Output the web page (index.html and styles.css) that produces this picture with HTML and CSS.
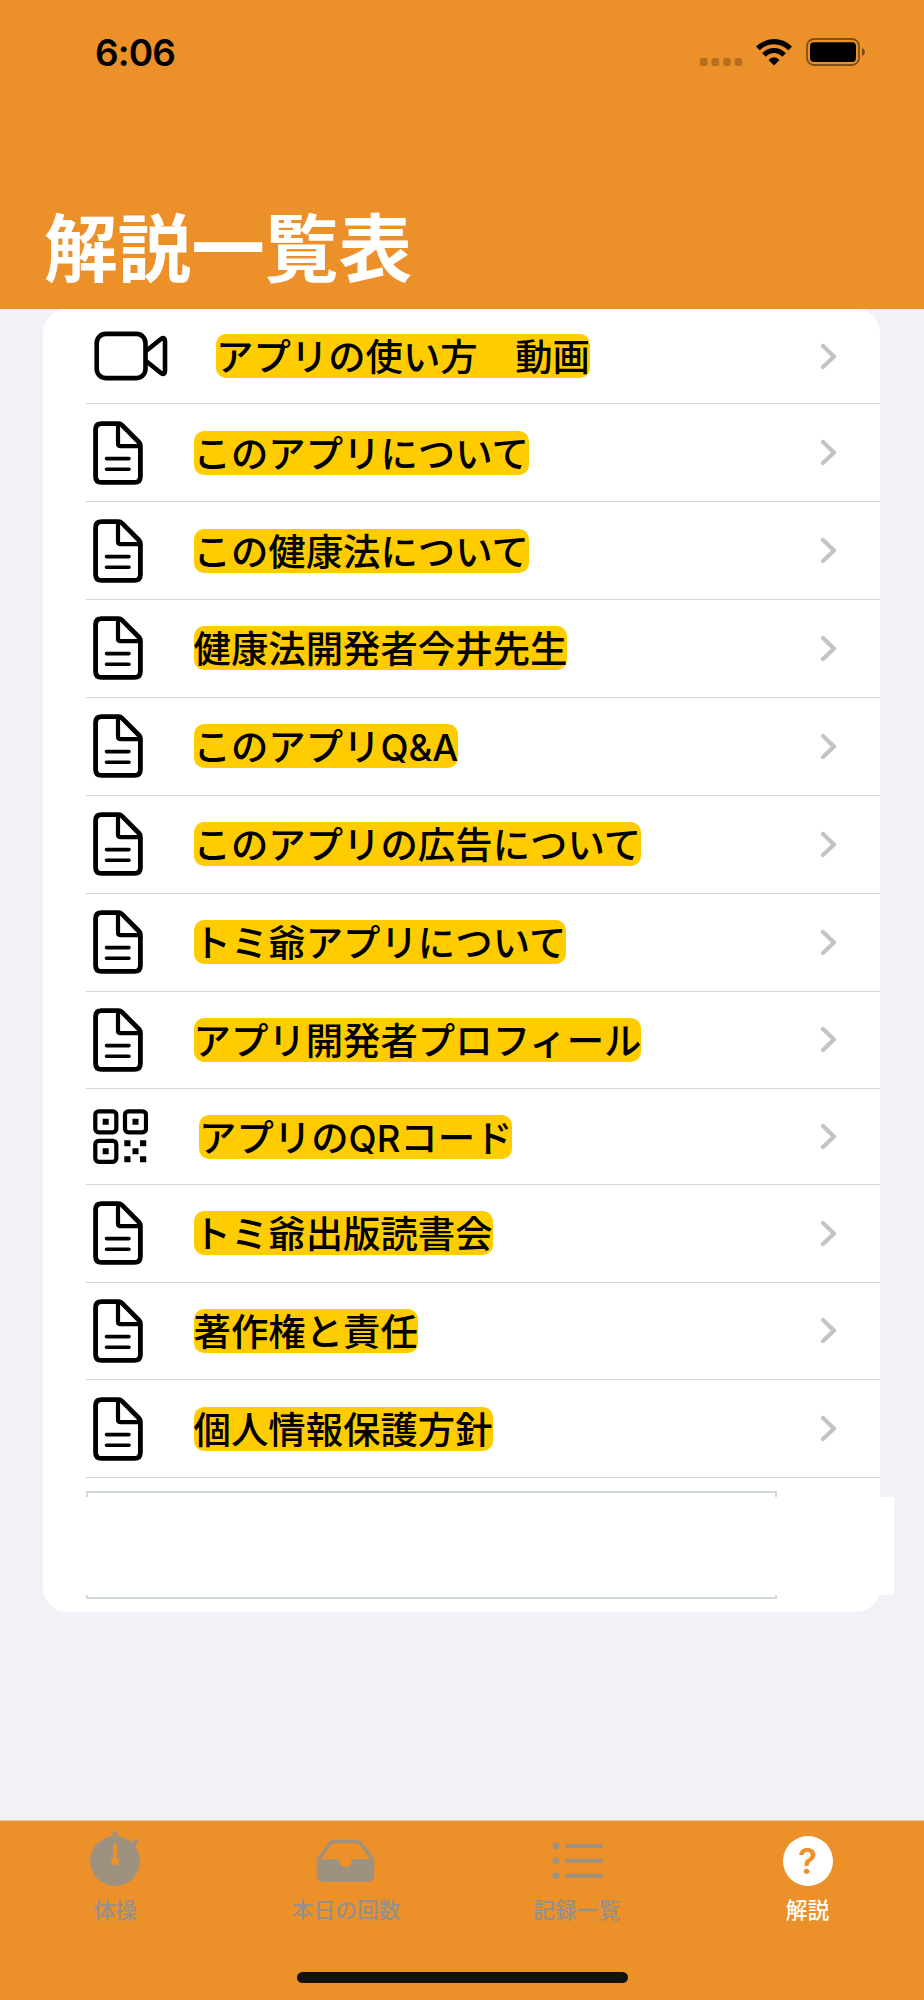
FILE: index.html
```html
<!DOCTYPE html>
<html lang="ja">
<head>
    <meta charset="UTF-8">
    <meta name="viewport" content="width=device-width, initial-scale=1.0">
    <title>解説一覧表</title>
    <link rel="stylesheet" href="styles.css">
</head>
<body>
    <!-- shared icons -->
    <svg class="sprite">
        <symbol id="doc" viewBox="0 0 50 64">
            <g fill="none" stroke="#000" stroke-linecap="round" stroke-linejoin="round">
                <path stroke-width="4.8" d="M8 2.6H25.5Q27.5 2.6 29 4.1L46 21.2Q47.4 22.6 47.4 25V55.4Q47.4 61.4 41.4 61.4H8.6Q2.6 61.4 2.6 55.4V8.6Q2.6 2.6 8.6 2.6Z"/>
                <path stroke-width="4.2" d="M25 4V22.5Q25 25.2 27.7 25.2H46"/>
                <path stroke-width="3.6" d="M13.5 37.6H36M13.5 48.2H36"/>
            </g>
        </symbol>
        <symbol id="chevron" viewBox="0 0 17 27">
            <path fill="none" stroke="#c4c4c7" stroke-width="4.2" stroke-linecap="round" stroke-linejoin="round" d="M3 2.9L14 13.5L3 24.1"/>
        </symbol>
    </svg>

    <header>
        <div class="status-bar">
            <span class="time">6:06</span>
            <div class="status-icons">
                <svg class="dots" width="43" height="8" viewBox="0 0 43 8">
                    <rect x="0" width="7.6" height="8" rx="2"/>
                    <rect x="11.6" width="7.6" height="8" rx="2"/>
                    <rect x="23.1" width="7.6" height="8" rx="2"/>
                    <rect x="34.6" width="7.6" height="8" rx="2"/>
                </svg>
                <svg class="wifi" width="36" height="27" viewBox="0 0 36 27">
                    <path fill="none" stroke="#000" stroke-width="5.2" d="M1.8 9.4Q9 2.7 18 2.7T34.2 9.4"/>
                    <path fill="none" stroke="#000" stroke-width="5" d="M8 16Q12.2 11.6 18 11.6T28 16"/>
                    <path d="M12.5 21Q15 18.2 18 18.2T23.5 21L18 26.6Z"/>
                </svg>
                <svg class="battery" width="60" height="28" viewBox="0 0 60 28">
                    <rect x="1" y="1" width="52" height="26" rx="7" fill="none" stroke="#000" stroke-width="1.8" opacity=".45"/>
                    <rect x="4" y="4.2" width="46" height="19.8" rx="4"/>
                    <path d="M56 9.7Q59 11.5 59 14T56 18.3Z" opacity=".5"/>
                </svg>
            </div>
        </div>
        <h1>解説一覧表</h1>
    </header>

    <main>
        <ul class="list">
            <li class="row first">
                <svg class="icon camera" width="74" height="50" viewBox="0 0 74 50">
                    <g fill="none" stroke="#000" stroke-width="4.6" stroke-linejoin="round">
                        <rect x="2.7" y="2.9" width="48.8" height="44.2" rx="9"/>
                        <path d="M52 20L67 8Q71 5.5 71 10V40Q71 44.5 67 42L52 30"/>
                    </g>
                </svg>
                <span class="label">アプリの使い方　動画</span>
                <svg class="chevron"><use href="#chevron"/></svg>
            </li>
            <li class="row">
                <svg class="icon"><use href="#doc"/></svg>
                <span class="label">このアプリについて</span>
                <svg class="chevron"><use href="#chevron"/></svg>
            </li>
            <li class="row">
                <svg class="icon"><use href="#doc"/></svg>
                <span class="label">この健康法について</span>
                <svg class="chevron"><use href="#chevron"/></svg>
            </li>
            <li class="row">
                <svg class="icon"><use href="#doc"/></svg>
                <span class="label">健康法開発者今井先生</span>
                <svg class="chevron"><use href="#chevron"/></svg>
            </li>
            <li class="row">
                <svg class="icon"><use href="#doc"/></svg>
                <span class="label">このアプリ<span class="latin">Q&amp;A</span></span>
                <svg class="chevron"><use href="#chevron"/></svg>
            </li>
            <li class="row">
                <svg class="icon"><use href="#doc"/></svg>
                <span class="label">このアプリの広告について</span>
                <svg class="chevron"><use href="#chevron"/></svg>
            </li>
            <li class="row">
                <svg class="icon"><use href="#doc"/></svg>
                <span class="label">トミ爺アプリについて</span>
                <svg class="chevron"><use href="#chevron"/></svg>
            </li>
            <li class="row">
                <svg class="icon"><use href="#doc"/></svg>
                <span class="label">アプリ開発者プロフィール</span>
                <svg class="chevron"><use href="#chevron"/></svg>
            </li>
            <li class="row qr-row">
                <svg class="icon qr" width="55" height="55" viewBox="0 0 55 55">
                    <g fill="none" stroke="#000" stroke-width="4.2">
                        <rect x="2.3" y="2.3" width="21" height="21" rx="3.5"/>
                        <rect x="32" y="2.3" width="21" height="21" rx="3.5"/>
                        <rect x="2.3" y="31.8" width="21" height="21" rx="3.5"/>
                    </g>
                    <path d="M9.7 9.7h6v6h-6zM39.5 9.7h6v6h-6zM9.7 39.3h6v6h-6zM39.5 39.3h6v6h-6zM31.3 31.3h6.2v6h-6.2zM47 31.3h6.2v6H47zM31.3 47.2h6.2v6h-6.2zM47 47.2h6.2v6H47z"/>
                </svg>
                <span class="label">アプリの<span class="latin">QR</span>コード</span>
                <svg class="chevron"><use href="#chevron"/></svg>
            </li>
            <li class="row">
                <svg class="icon"><use href="#doc"/></svg>
                <span class="label">トミ爺出版読書会</span>
                <svg class="chevron"><use href="#chevron"/></svg>
            </li>
            <li class="row">
                <svg class="icon"><use href="#doc"/></svg>
                <span class="label">著作権と責任</span>
                <svg class="chevron"><use href="#chevron"/></svg>
            </li>
            <li class="row">
                <svg class="icon"><use href="#doc"/></svg>
                <span class="label">個人情報保護方針</span>
                <svg class="chevron"><use href="#chevron"/></svg>
            </li>
            <li class="ad">
                <div class="ad-frame"></div>
                <div class="ad-cover"></div>
            </li>
        </ul>
    </main>

    <nav>
        <div class="tab">
            <svg width="60" height="60" viewBox="0 0 60 60">
                <circle cx="30" cy="30" r="25"/>
                <path fill="none" stroke="#9f917f" stroke-width="5" stroke-linecap="round" d="M30 2.5V8M47 16L50.5 10.7"/>
                <path fill="none" stroke="#ec9029" stroke-width="4" stroke-linecap="round" d="M30 14.5V30"/>
                <circle cx="30" cy="30.2" r="4" fill="#ec9029"/>
            </svg>
            <span>体操</span>
        </div>
        <div class="tab">
            <svg width="60" height="60" viewBox="0 0 60 60">
                <path fill="none" stroke="#9f917f" stroke-width="3.6" stroke-linejoin="round" d="M2.5 28L14 12.5Q16 10.5 18 10.5H41Q43 10.5 44.8 12.5L56.5 28"/>
                <path d="M.8 28.3H23.2Q23.4 36.3 29.5 36.3T35.8 28.3H58.2V44.5Q58.2 51 51.7 51H7.3Q.8 51 .8 44.5Z"/>
            </svg>
            <span>本日の回数</span>
        </div>
        <div class="tab">
            <svg width="60" height="60" viewBox="0 0 60 60">
                <circle cx="9" cy="15" r="3.4"/>
                <circle cx="9" cy="29.8" r="3.4"/>
                <circle cx="9" cy="44.7" r="3.4"/>
                <path fill="none" stroke="#9f917f" stroke-width="4" stroke-linecap="round" d="M20 15H54M20 29.8H54M20 44.7H54"/>
            </svg>
            <span>記録一覧</span>
        </div>
        <div class="tab active">
            <div class="help">?</div>
            <span>解説</span>
        </div>
        <div class="home-bar"></div>
    </nav>
</body>
</html>
```
FILE: styles.css
```css
* {
    box-sizing: border-box;
}

body {
    margin: 0;
    height: 2000px;
    display: flex;
    flex-direction: column;
    background-color: #f2f1f7;
    font-family: Inter, "Noto Sans CJK JP", sans-serif;
    overflow: hidden;
}

.sprite {
    display: none;
}

svg {
    display: block;
    flex: none;
}

header {
    height: 309px;
    flex: none;
    background-color: #ec9029;
}

.status-bar {
    height: 104px;
    padding: 0 58px 0 95px;
    display: flex;
    justify-content: space-between;
    align-items: center;
}

.time {
    font-size: 37px;
    font-weight: 600;
    letter-spacing: -0.9px;
}

.status-icons {
    display: flex;
    align-items: center;
}

.dots {
    margin: 19px 13px 0 0;
    opacity: 0.22;
}

.wifi {
    margin-right: 14px;
}

h1 {
    margin: 85px 0 0 44px;
    font-family: "Noto Sans CJK JP", sans-serif;
    font-size: 73.6px;
    font-weight: 700;
    line-height: 110px;
    color: #fff;
}

main {
    flex: 1;
}

.list {
    width: 837px;
    height: 1303px;
    margin: 0 0 0 43px;
    padding: 0 0 0 43px;
    list-style: none;
    background-color: #fff;
    border-radius: 24px;
}

.row {
    height: 97.9px;
    padding: 0 43px 0 7px;
    display: flex;
    align-items: center;
    border-bottom: 1px solid #d5d5d6;
}

.first {
    height: 95.2px;
}

.qr-row {
    height: 95.2px;
}

.icon {
    width: 50px;
    height: 64px;
    margin-right: 50.5px;
}

.camera {
    width: 74px;
    height: 50px;
    margin: 0 48px 0 1px;
}

.qr {
    width: 55px;
    height: 55px;
    margin-right: 51px;
}

.label {
    height: 44px;
    font-family: "Noto Sans CJK JP", sans-serif;
    font-size: 37.4px;
    font-weight: 500;
    line-height: 42px;
    white-space: nowrap;
    background-color: #fc0;
    border-radius: 10px;
}

.latin {
    font-family: Inter, sans-serif;
    font-size: 36.5px;
    font-weight: 500;
}

.chevron {
    width: 17px;
    height: 27px;
    margin-left: auto;
}

/* empty banner slot with its cover */
.ad {
    position: relative;
    height: 134px;
    padding-top: 13px;
}

.ad-frame {
    width: 691px;
    height: 108px;
    border: 2px solid #d0dadd;
}

.ad-cover {
    position: absolute;
    top: 19px;
    left: 0;
    width: 808px;
    height: 98px;
    background-color: #fff;
}

nav {
    position: relative;
    height: 180px;
    flex: none;
    display: flex;
    padding-right: 1px;
    background-color: #ec9029;
    border-top: 1px solid #e5c7a2;
}

.tab {
    flex: 1;
    padding-top: 10px;
    display: flex;
    flex-direction: column;
    align-items: center;
    font-family: "Noto Sans CJK JP", sans-serif;
    font-size: 21.8px;
    font-weight: 500;
    line-height: 32px;
    color: #959089;
    fill: #9f917f;
}

.tab span {
    margin-top: 2px;
}

.active {
    color: #fff;
}

.help {
    width: 50px;
    height: 50px;
    margin: 5px 0;
    border-radius: 50%;
    background-color: #fff;
    color: #ec9029;
    font-family: Inter, sans-serif;
    font-size: 35px;
    font-weight: 600;
    line-height: 50px;
    text-align: center;
}

.home-bar {
    position: absolute;
    left: 297px;
    bottom: 17px;
    width: 331px;
    height: 11px;
    border-radius: 6px;
    background-color: #111;
}
```
